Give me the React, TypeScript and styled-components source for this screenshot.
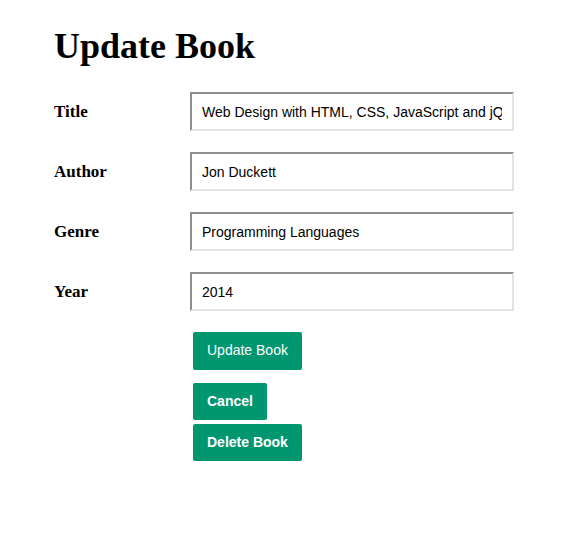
import React from "react";
import styled, { createGlobalStyle } from "styled-components";

const Global = createGlobalStyle`
  html, body { margin: 0; padding: 0; background: #ffffff; }
  body { font-family: "Liberation Serif", "Times New Roman", serif; color: #000; }
`;

const Page = styled.div`
  padding: 26px 0 0 54px;
  width: 578px;
  box-sizing: border-box;
`;

const Heading = styled.h1`
  margin: 0 0 25px 0;
  font-family: "Liberation Serif", "Times New Roman", serif;
  font-weight: 700;
  font-size: 36px;
  line-height: 41px;
`;

const Form = styled.form`
  display: flex;
  flex-direction: column;
  gap: 21px;
`;

const Row = styled.div`
  display: grid;
  grid-template-columns: 136px 324px;
  align-items: center;
`;

const Label = styled.label`
  font-family: "Liberation Serif", "Times New Roman", serif;
  font-weight: 700;
  font-size: 17px;
`;

const Input = styled.input`
  box-sizing: border-box;
  width: 324px;
  height: 39px;
  border-style: solid;
  border-width: 2px;
  border-color: #8d8d8d #e3e3e3 #e3e3e3 #8d8d8d;
  padding: 0 10px;
  font-family: "Liberation Sans", Arial, sans-serif;
  font-size: 14px;
  color: #000;
  background: #fff;
  outline: none;
`;

const Actions = styled.div`
  display: flex;
  flex-direction: column;
  align-items: flex-start;
  margin-left: 139px;
`;

const Button = styled.button<{ $bold?: boolean; $gap?: number }>`
  box-sizing: border-box;
  height: ${(p) => (p.$bold ? 37 : 38)}px;
  padding: 0 14px 2px;
  margin-bottom: ${(p) => p.$gap ?? 0}px;
  border: none;
  border-radius: 2px;
  background: #00966f;
  color: #fff;
  font-family: "Liberation Sans", Arial, sans-serif;
  font-size: 14px;
  font-weight: ${(p) => (p.$bold ? 700 : 400)};
  cursor: pointer;
`;

const fields = [
  { label: "Title", value: "Web Design with HTML, CSS, JavaScript and jQuery" },
  { label: "Author", value: "Jon Duckett" },
  { label: "Genre", value: "Programming Languages" },
  { label: "Year", value: "2014" },
];

export default function App() {
  return (
    <>
      <Global />
      <Page>
        <Heading>Update Book</Heading>
        <Form onSubmit={(e) => e.preventDefault()}>
          {fields.map((f) => (
            <Row key={f.label}>
              <Label>{f.label}</Label>
              <Input defaultValue={f.value} />
            </Row>
          ))}
          <Actions>
            <Button type="submit" $gap={13}>Update Book</Button>
            <Button type="button" $bold $gap={4}>Cancel</Button>
            <Button type="button" $bold>Delete Book</Button>
          </Actions>
        </Form>
      </Page>
    </>
  );
}
